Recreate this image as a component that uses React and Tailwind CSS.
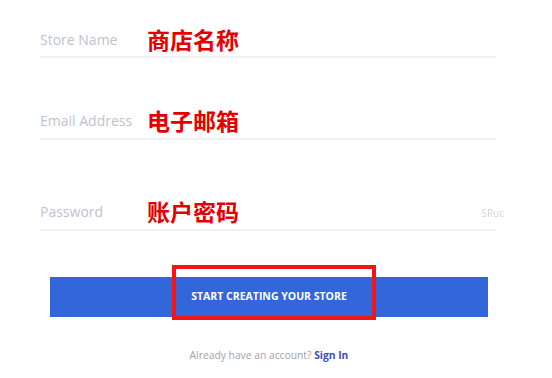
import React from 'react';

const fields = [
  { label: 'Store Name', note: '商店名称', box: 'mt-[22px] h-[36px]' },
  { label: 'Email Address', note: '电子邮箱', box: 'mt-[45px] h-[37px]' },
  { label: 'Password', note: '账户密码', box: 'mt-[54px] h-[37px]', hint: true },
];

export default function App() {
  return (
    <div className="w-[552px] h-[378px] bg-white overflow-hidden font-['Open_Sans',sans-serif]">
      <div className="pl-[40px] pr-[56px]">
        {fields.map((f) => (
          <div
            key={f.label}
            className={`relative flex items-center border-b-2 border-[#eff0f4] ${f.box}`}
          >
            <span className="w-[107px] shrink-0 text-[14px] text-[#bfc2cf]">{f.label}</span>
            <span className="text-[23px] leading-none font-bold text-[#e30000] font-['Noto_Sans_CJK_SC',sans-serif]">
              {f.note}
            </span>
            {f.hint && (
              <span className="absolute right-[-8px] top-[12px] text-[10px] text-[#d3d5dc] blur-[0.6px]">
                SRuc
              </span>
            )}
          </div>
        ))}

        <div className="ml-[10px] mr-[8px] mt-[46px]">
          <div className="relative">
            <button className="w-full h-[40px] bg-[#3466db] text-white text-[10.5px] font-bold">
              START CREATING YOUR STORE
            </button>
            <div className="absolute left-[122px] top-[-12px] w-[204px] h-[55px] border-4 border-[#f31414] pointer-events-none" />
          </div>
          <p className="mt-[31px] text-center text-[10.3px] leading-[14px] text-[#9fa1aa]">
            Already have an account? <span className="font-bold text-[#3d4db5]">Sign In</span>
          </p>
        </div>
      </div>
    </div>
  );
}
